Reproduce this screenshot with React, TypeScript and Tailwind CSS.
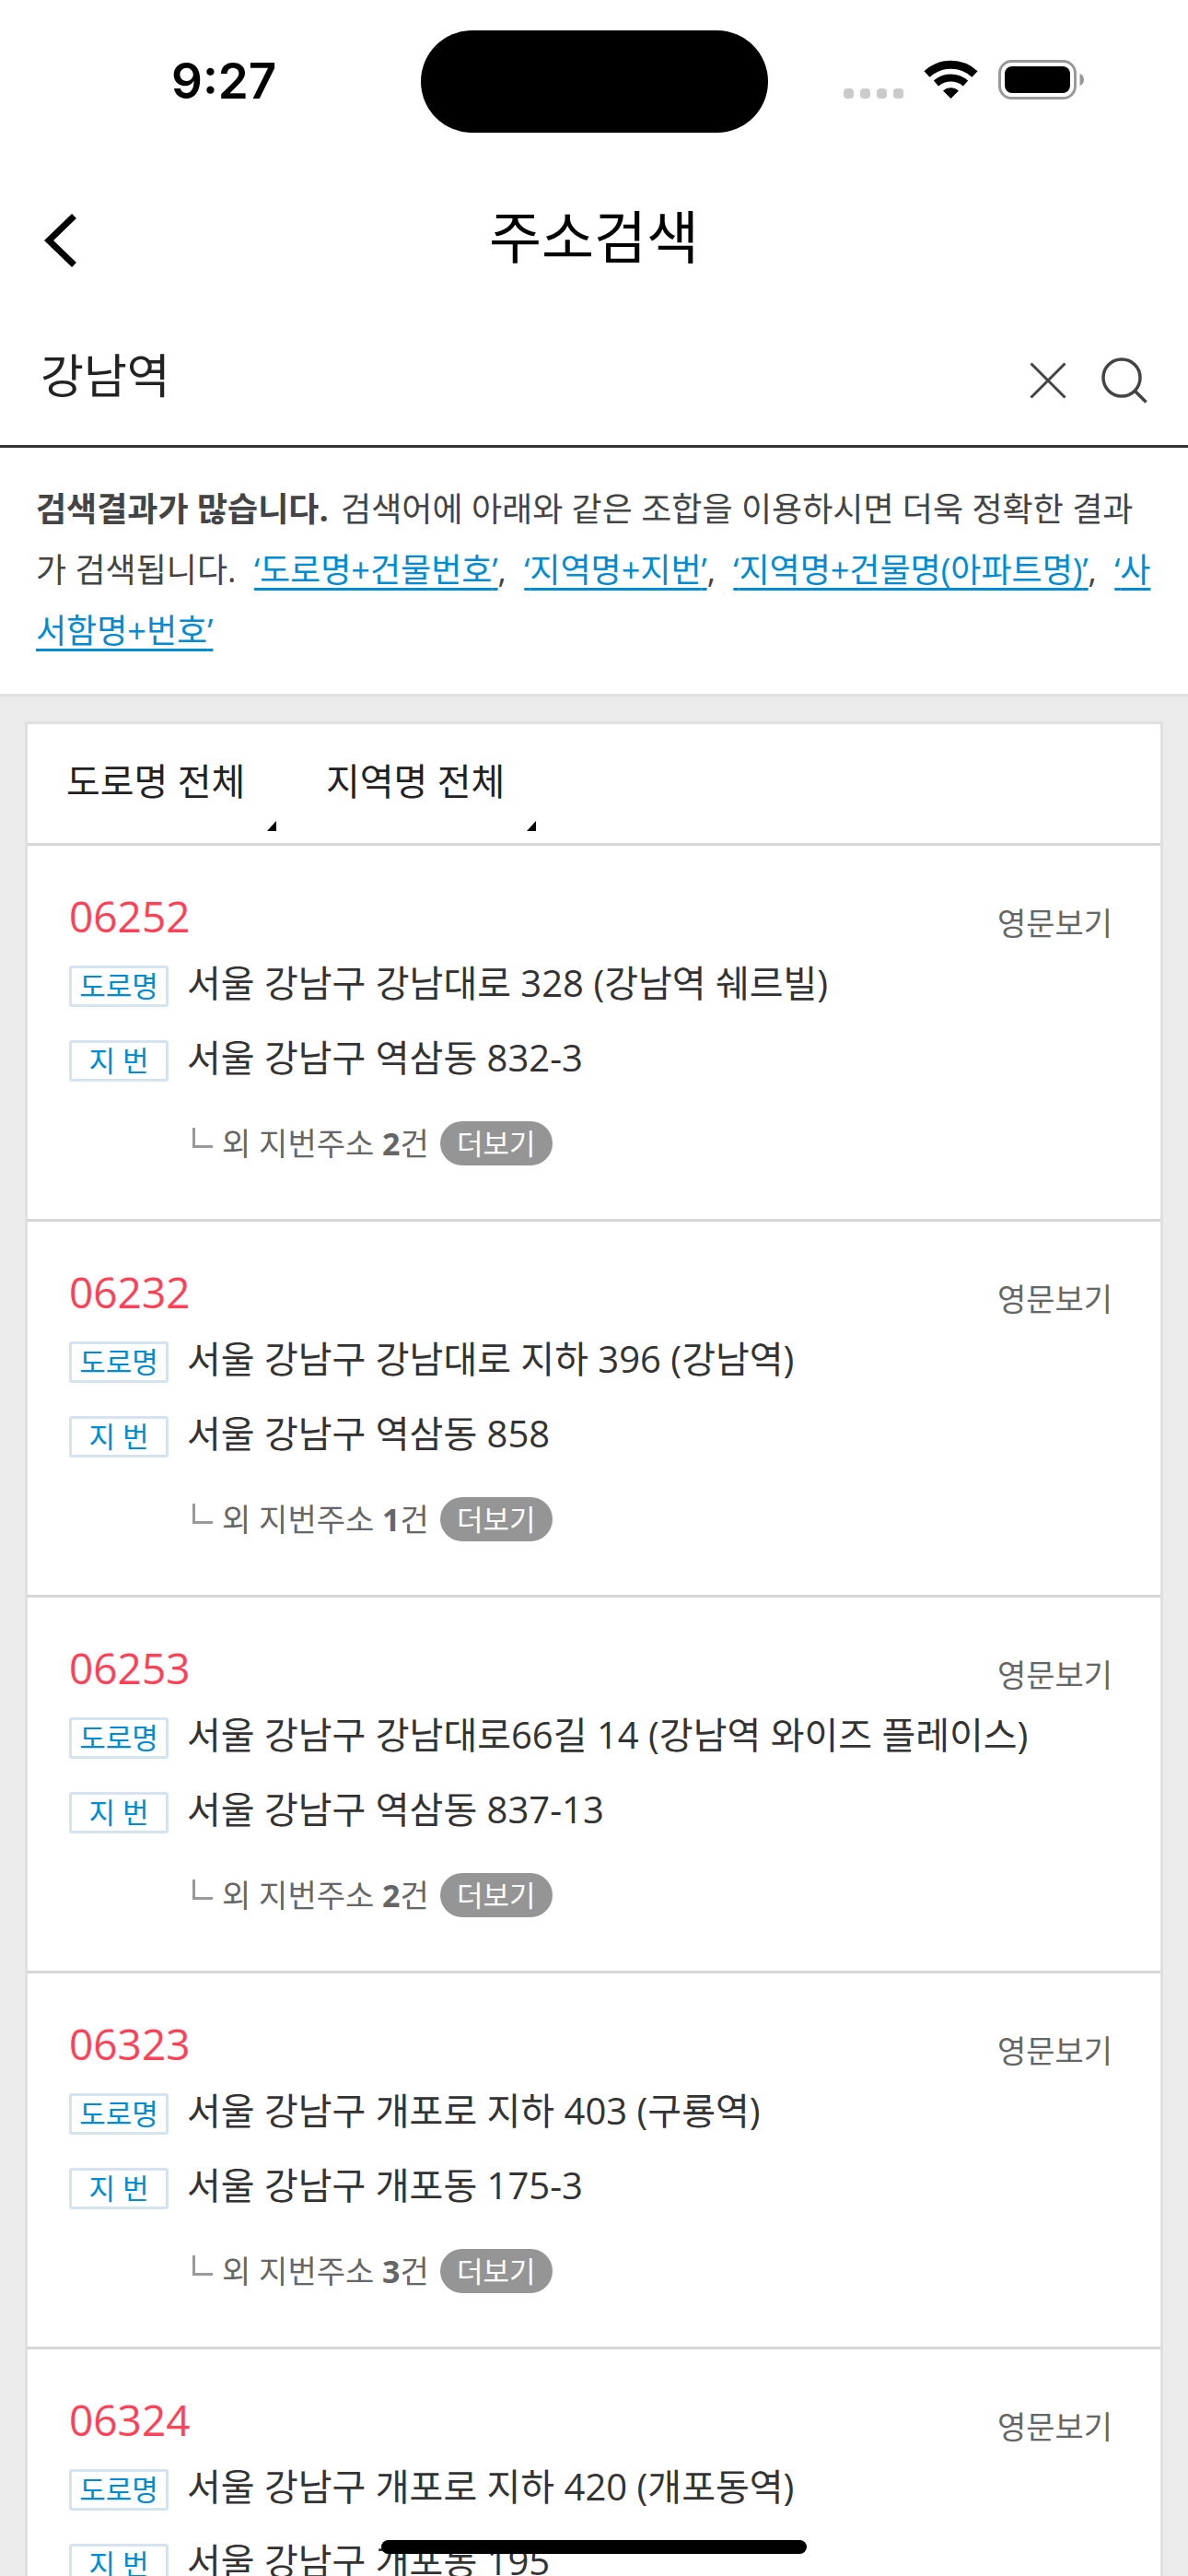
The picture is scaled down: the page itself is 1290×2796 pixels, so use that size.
import { useState } from "react";

const hints = ["도로명+건물번호", "지역명+지번", "지역명+건물명(아파트명)", "사서함명+번호"];

const filters = ["도로명 전체", "지역명 전체"];

const results = [
  { zip: "06252", road: "서울 강남구 강남대로 328 (강남역 쉐르빌)", lot: "서울 강남구 역삼동 832-3", more: 2 },
  { zip: "06232", road: "서울 강남구 강남대로 지하 396 (강남역)", lot: "서울 강남구 역삼동 858", more: 1 },
  { zip: "06253", road: "서울 강남구 강남대로66길 14 (강남역 와이즈 플레이스)", lot: "서울 강남구 역삼동 837-13", more: 2 },
  { zip: "06323", road: "서울 강남구 개포로 지하 403 (구룡역)", lot: "서울 강남구 개포동 175-3", more: 3 },
  { zip: "06324", road: "서울 강남구 개포로 지하 420 (개포동역)", lot: "서울 강남구 개포동 195", more: 1 },
];

function StatusBar() {
  return (
    <div className="grid grid-cols-3 items-center pt-[33px]">
      <div className="pb-[2px] pl-[186px] font-['Inter',sans-serif] text-[53px] leading-[60px] font-semibold text-black">9:27</div>
      <div className="h-[111px] w-[377px] justify-self-center rounded-full bg-black" />
      <div className="flex items-center justify-end pr-[112px] pb-1">
        <svg className="h-[50px] w-[264px]" viewBox="0 0 264 50" fill="none">
          <g fill="#cbcbcb">
            <rect x="2" y="34" width="11" height="11" rx="4" />
            <rect x="20" y="34" width="11" height="11" rx="4" />
            <rect x="38" y="34" width="11" height="11" rx="4" />
            <rect x="56" y="34" width="11" height="11" rx="4" />
          </g>
          <g stroke="#000">
            <path d="M92.5 18.5a38 38 0 0 1 52 0" strokeWidth="9" />
            <path d="M102.5 28.5a24 24 0 0 1 32 0" strokeWidth="8" />
          </g>
          <path d="M118.5 45l-8.5-8.5a12.5 12.5 0 0 1 17 0z" fill="#000" />
          <rect x="171.5" y="4.5" width="82" height="40" rx="13" stroke="#999" strokeWidth="3" />
          <rect x="177" y="10" width="71" height="29" rx="8" fill="#000" />
          <path d="M258.5 18c6 2 6 11 0 13z" fill="#999" />
        </svg>
      </div>
    </div>
  );
}

function AddressRow({ label, address }: { label: string; address: string }) {
  return (
    <div className="flex h-[81px] items-center gap-[20px]">
      <span className="flex h-[45px] w-[108px] shrink-0 items-center justify-center rounded-[3px] border-3 border-[#d5e3f0] text-[31px] leading-none text-[#008bd3]">
        {label}
      </span>
      <span className="pb-2 text-[40px] leading-[60px]">{address}</span>
    </div>
  );
}

export default function App() {
  const [query, setQuery] = useState("강남역");

  return (
    <div className="flex h-screen flex-col overflow-hidden bg-white font-['Open_Sans','Noto_Sans_CJK_KR',sans-serif] text-[#333]">
      <StatusBar />

      <header className="grid grid-cols-[1fr_auto_1fr] items-center px-12 pt-[70px]">
        <button aria-label="뒤로" className="justify-self-start pt-1">
          <svg className="h-[60px] w-[36px]" viewBox="0 0 36 60" fill="none" stroke="#000" strokeWidth="7">
            <path d="M32.5 3.5L5 30l27.5 26.5" />
          </svg>
        </button>
        <h1 className="pb-1 text-[62px] leading-[86px] text-black">주소검색</h1>
      </header>

      <form className="flex items-center border-b-3 border-[#333] px-11 pt-[47px] pb-[24px]" onSubmit={(e) => e.preventDefault()}>
        <input
          aria-label="주소 검색어"
          value={query}
          onChange={(e) => setQuery(e.target.value)}
          className="h-[108px] min-w-0 flex-1 text-[51px] text-[#222] outline-none"
        />
        <div className="flex items-center gap-[38px] pt-4">
          <button type="button" aria-label="지우기" onClick={() => setQuery("")}>
            <svg className="h-[40px] w-[40px]" viewBox="0 0 40 40" fill="none" stroke="#444" strokeWidth="3">
              <path d="M1.5 1.5l37 37M38.5 1.5l-37 37" />
            </svg>
          </button>
          <button aria-label="검색">
            <svg className="h-[50px] w-[50px]" viewBox="0 0 50 50" fill="none" stroke="#444" strokeWidth="3.5">
              <circle cx="22" cy="22" r="20" />
              <path d="M36.5 36.5l12 12" />
            </svg>
          </button>
        </div>
      </form>

      <main className="min-h-0 flex-1 overflow-y-auto bg-[#ebebeb] [scrollbar-width:none]">
        <p className="border-b-3 border-[#dfe0df] bg-white pt-[34px] pr-9 pb-[35px] pl-[39px] text-[36px] leading-[66px] break-all text-[#444]">
          <strong className="mr-1">검색결과가 많습니다.</strong> 검색어에 아래와 같은 조합을 이용하시면 더욱 정확한 결과가 검색됩니다.{" "}
          {hints.map((hint, i) => (
            <span key={hint}>
              <a href="#" className="ml-[10px] text-[#008bd3] underline decoration-3 underline-offset-[6px]">
                ‘{hint}’
              </a>
              {i < hints.length - 1 && ", "}
            </span>
          ))}
        </p>

        <section className="mx-[27px] mt-[27px] border-3 border-[#dfe0df] bg-white">
          <div className="flex h-[129px] pl-[42px]">
            {filters.map((f) => (
              <button key={f} className="mr-[54px] flex w-[228px] flex-col pt-[32px] text-left text-[40px] leading-[60px] text-[#222]">
                <span>{f}</span>
                <svg className="mt-[12px] h-[12px] w-[10px] self-end" viewBox="0 0 10 12">
                  <path d="M10 1v11H0z" fill="#000" />
                </svg>
              </button>
            ))}
          </div>

          <ul>
            {results.map((r) => (
              <li key={r.zip} className="border-t-3 border-[#d6d6d6] pr-[52px] pb-[58px] pl-[45px]">
                <div className="flex h-[112px] justify-between pt-[46px]">
                  <span className="text-[46px] leading-[60px] text-[#ff4157]">{r.zip}</span>
                  <button className="self-start pt-2 text-[34px] leading-[60px] text-[#666]">영문보기</button>
                </div>
                <AddressRow label="도로명" address={r.road} />
                <AddressRow label="지 번" address={r.lot} />
                <div className="mt-[25px] flex items-center pl-[134px] text-[34px] leading-[48px] text-[#666]">
                  <svg className="mr-[10px] mb-3 h-[22px] w-[22px]" viewBox="0 0 22 22" fill="none" stroke="#999" strokeWidth="3">
                    <path d="M1.5 0v20.5H22" />
                  </svg>
                  <span>
                    외 지번주소 <strong>{r.more}</strong>건
                  </span>
                  <button className="ml-3 flex h-[48px] w-[122px] items-center justify-center rounded-full bg-[#959595] text-[31px] text-white">
                    더보기
                  </button>
                </div>
              </li>
            ))}
          </ul>
        </section>
      </main>

      {/* Home indicator */}
      <div className="fixed bottom-6 left-1/2 h-[15px] w-[462px] -translate-x-1/2 rounded-full bg-black" />
    </div>
  );
}
